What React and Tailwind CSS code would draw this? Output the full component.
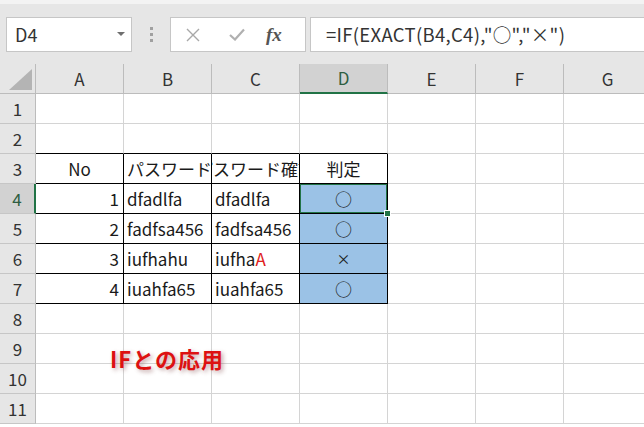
import React from "react";

const FONT = { fontFamily: '"Noto Sans CJK JP", "Noto Sans", sans-serif' };

const cols = ["A", "B", "C", "D", "E", "F", "G"];

// table data: rows 3..7, columns A..D
const rows = [
  null,
  null,
  { a: "No", b: "パスワード", c: "パスワード確認", d: "判定", header: true },
  { a: "1", b: "dfadlfa", c: "dfadlfa", d: "○" },
  { a: "2", b: "fadfsa456", c: "fadfsa456", d: "○" },
  { a: "3", b: "iufhahu", c: "iufha", cRed: "A", d: "×" },
  { a: "4", b: "iuahfa65", c: "iuahfa65", d: "○" },
  null,
  null,
  null,
  null,
];

const Cell = ({ children, className = "" }) => (
  <div
    className={`relative h-[30px] border-r border-b flex items-center overflow-hidden whitespace-nowrap text-[17px] text-[#1a1a1a] ${className}`}
  >
    {children}
  </div>
);

const FormulaBar = () => (
  <div className="h-[64px] bg-[#e6e6e6] border-t-[4px] border-[#f3f3f3] flex items-start pt-[13px]">
    <div className="ml-[6px] w-[126px] h-[35px] bg-white border border-[#c6c6c6] flex items-center justify-between pl-[8px] pr-[6px]">
      <span className="text-[18px] text-[#333]">D4</span>
      <svg width="8" height="5" viewBox="0 0 8 5">
        <path d="M0 0 L8 0 L4 4 Z" fill="#6f6f6f" />
      </svg>
    </div>
    <div className="w-[38px] h-[35px] flex flex-col items-center justify-center gap-[3px]">
      <span className="w-[3px] h-[3px] bg-[#a0a0a0]" />
      <span className="w-[3px] h-[3px] bg-[#a0a0a0]" />
      <span className="w-[3px] h-[3px] bg-[#a0a0a0]" />
    </div>
    <div className="w-[136px] h-[35px] bg-white border border-[#c6c6c6] flex items-center">
      <svg className="ml-[15px]" width="14" height="14" viewBox="0 0 14 14">
        <path d="M1 1 L13 13 M13 1 L1 13" stroke="#a8a8a8" strokeWidth="1.4" />
      </svg>
      <svg className="ml-[29px]" width="16" height="13" viewBox="0 0 16 13">
        <path d="M1 7 L6 11.5 L15 1.5" stroke="#b0b0b0" strokeWidth="2.2" fill="none" />
      </svg>
      <span
        className="ml-[21px] text-[19px] italic font-bold text-[#555] leading-none"
        style={{ fontFamily: '"Liberation Serif", serif' }}
      >
        fx
      </span>
    </div>
    <div className="ml-[4px] flex-1 h-[35px] bg-white border border-r-0 border-[#c6c6c6] flex items-center pl-[15px]">
      <span className="text-[18.5px] text-[#333] tracking-[0.3px]">=IF(EXACT(B4,C4),"○","×")</span>
    </div>
  </div>
);

const ColumnHeaders = () => (
  <div className="grid grid-cols-[36px_repeat(7,88px)] h-[30px] bg-[#e6e6e6]">
    <div className="relative border-r border-b border-[#bcbcbc] flex items-end justify-end pr-[3px] pb-[3px]">
      <svg width="23" height="21" viewBox="0 0 23 21">
        <path d="M23 0 L23 21 L0 21 Z" fill="#b4b4b4" />
      </svg>
    </div>
    {cols.map((c) => (
      <div
        key={c}
        className={`flex items-center justify-center text-[17px] border-r ${
          c === "D"
            ? "bg-[#d2d2d2] text-[#2f5e42] border-b-2 border-b-[#217346] border-r-[#bcbcbc]"
            : "text-[#333] border-b border-[#bcbcbc]"
        }`}
      >
        {c}
      </div>
    ))}
  </div>
);

export default function App() {
  return (
    <div className="w-[644px] h-[427px] overflow-hidden bg-white" style={FONT}>
      <FormulaBar />
      <ColumnHeaders />
      <div className="relative">
        {rows.map((r, i) => {
          const n = i + 1;
          const inTable = n >= 3 && n <= 7;
          const aboveTable = n === 2;
          const gridB = inTable || aboveTable ? "border-b-black" : "border-b-[#d4d4d4]";
          const tr = inTable ? "border-r-black" : "border-r-[#d4d4d4]";
          return (
            <div key={n} className="grid grid-cols-[36px_repeat(7,88px)]">
              <div
                className={`h-[30px] flex items-center justify-center text-[17px] border-b border-b-[#c6c6c6] ${
                  n === 4
                    ? "bg-[#d2d2d2] text-[#2f5e42] border-r-2 border-r-[#217346]"
                    : "bg-[#e6e6e6] text-[#333] border-r border-r-[#bcbcbc]"
                }`}
              >
                {n}
              </div>
              <Cell className={`${gridB} ${tr} ${r && r.header ? "justify-center" : "justify-end pr-[4px]"}`}>
                {r ? r.a : ""}
              </Cell>
              <Cell className={`${gridB} ${tr} pl-[3px]`}>{r ? r.b : ""}</Cell>
              <Cell className={`${gridB} ${tr} ${r && r.header ? "justify-center" : "pl-[3px]"}`}>
                {r ? (
                  <span>
                    {r.c}
                    {r.cRed && <span className="text-[#e02020]">{r.cRed}</span>}
                  </span>
                ) : (
                  ""
                )}
              </Cell>
              <Cell
                className={`${gridB} ${tr} justify-center ${
                  inTable && !r.header ? "bg-[#9bc2e6]" : ""
                }`}
              >
                {r ? <span className={r.d === "×" ? "text-[14px]" : "text-[17px]"}>{r.d}</span> : ""}
                {n === 4 && (
                  <span className="absolute -left-px -top-px w-[89px] h-[31px] border-2 border-[#217346]" />
                )}
              </Cell>
              <Cell className="border-b-[#d4d4d4] border-r-[#d4d4d4]" />
              <Cell className="border-b-[#d4d4d4] border-r-[#d4d4d4]" />
              <Cell className="border-b-[#d4d4d4] border-r-[#d4d4d4]" />
            </div>
          );
        })}
        {/* fill handle of the selection */}
        <span className="absolute left-[384px] top-[116px] w-[7px] h-[7px] bg-[#217346] border border-white" />
        {/* annotation text */}
        <span
          className="absolute left-[110px] top-[248px] text-[22px] font-bold text-[#dd1111] tracking-[1px]"
          style={{ textShadow: "2px 2px 4px rgba(120,60,60,0.45)" }}
        >
          IFとの応用
        </span>
      </div>
    </div>
  );
}
